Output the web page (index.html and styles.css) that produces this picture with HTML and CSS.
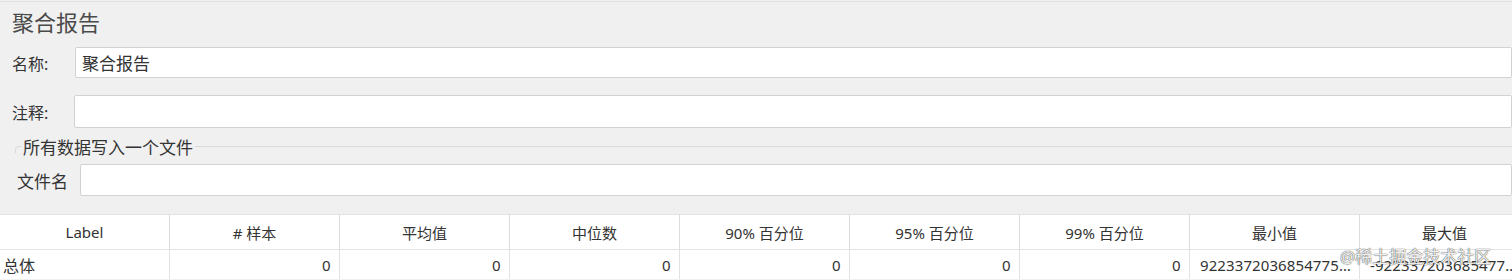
FILE: index.html
```html
<!DOCTYPE html>
<html>
<head>
	<meta charset="utf-8">
	<title>聚合报告</title>
	<link rel="stylesheet" href="styles.css">
</head>
<body>
	<div class="panel">
		<div class="title">聚合报告</div>

		<div class="row row-name">
			<label class="lbl" for="nombre">名称:</label>
			<input class="field" id="nombre" type="text" value="聚合报告">
		</div>

		<div class="row row-comment">
			<label class="lbl" for="comentario">注释:</label>
			<input class="field" id="comentario" type="text">
		</div>

		<div class="group">
			<span class="group-edge"></span>
			<span class="group-title">所有数据写入一个文件</span>
			<span class="group-line"></span>
		</div>

		<div class="row row-file">
			<label class="lbl" for="archivo">文件名</label>
			<input class="field" id="archivo" type="text">
		</div>

		<!-- tabla de resultados -->
		<div class="table-wrap">
			<table class="report">
				<thead>
					<tr>
						<th>Label</th>
						<th># 样本</th>
						<th>平均值</th>
						<th>中位数</th>
						<th>90% 百分位</th>
						<th>95% 百分位</th>
						<th>99% 百分位</th>
						<th>最小值</th>
						<th>最大值</th>
					</tr>
				</thead>
				<tbody>
					<tr>
						<td class="name">总体</td>
						<td>0</td>
						<td>0</td>
						<td>0</td>
						<td>0</td>
						<td>0</td>
						<td>0</td>
						<td class="long">9223372036854775807</td>
						<td class="long">-9223372036854775808</td>
					</tr>
				</tbody>
			</table>
			<div class="watermark">@稀土掘金技术社区</div>
		</div>
	</div>
</body>
</html>
```

FILE: styles.css
```css
body{
	margin: 0;
	background-color: #f0f0f0;
	font-family: "Noto Sans", "Noto Sans CJK SC", sans-serif;
	color: #3a3a3a;
	overflow: hidden;
}

.panel{
	margin-top: 1px;
	border-top: 1px solid #e3e3e3;
}

.title{
	height: 44px;
	line-height: 40px;
	padding-left: 12px;
	font-size: 22px;
	color: #4a4a4a;
}

.row{
	display: flex;
	align-items: center;
}

.lbl{
	flex: none;
	font-size: 16px;
	color: #333;
}

.field{
	flex: 1;
	box-sizing: border-box;
	margin: 0;
	padding: 0 6px;
	background: #fff;
	border: 1px solid #d2d2d2;
	border-radius: 2px;
	font-family: inherit;
	font-size: 17px;
	color: #333;
	outline: none;
}

.row-name{
	margin-top: 1px;
}
.row-name .lbl{
	width: 75px;
	padding-left: 12px;
	box-sizing: border-box;
}
.row-name .field{
	height: 31px;
}

.row-comment{
	margin-top: 17px;
}
.row-comment .lbl{
	width: 74px;
	padding-left: 12px;
	box-sizing: border-box;
}
.row-comment .field{
	height: 33px;
}

.group{
	display: flex;
	align-items: center;
	height: 20px;
	margin-top: 8px;
	padding-left: 15px;
}
.group-edge{
	width: 5px;
	height: 6px;
	margin-top: 6px;
	border-top: 1px solid #dadada;
	border-left: 1px solid #dadada;
	border-top-left-radius: 4px;
}
.group-title{
	padding: 0 2px;
	font-size: 17px;
	color: #333;
}
.group-line{
	flex: 1;
	border-top: 1px solid #dadada;
}

.row-file{
	margin-top: 8px;
}
.row-file .lbl{
	width: 80px;
	padding-left: 17px;
	box-sizing: border-box;
	font-size: 17px;
}
.row-file .field{
	height: 32px;
}

.table-wrap{
	position: relative;
	margin-top: 18px;
}

.report{
	table-layout: fixed;
	width: 1530px;
	border-collapse: collapse;
	background: #fff;
	font-size: 15px;
	color: #333;
}
.report th{
	width: 169px;
	height: 34px;
	padding: 0;
	font-weight: normal;
	border-top: 1px solid #e2e2e2;
	border-right: 1px solid #dcdcdc;
	border-bottom: 1px solid #e4e4e4;
}
.report td{
	height: 29px;
	padding: 0 8px;
	text-align: right;
	letter-spacing: 0.4px;
	border-right: 1px solid #e2e2e2;
	white-space: nowrap;
	overflow: hidden;
	text-overflow: ellipsis;
}
.report td.long{
	padding: 0 6px 0 10px;
	letter-spacing: 0.1px;
}
.report td.name{
	padding-left: 3px;
	text-align: left;
	letter-spacing: 0;
	font-size: 16px;
}

.watermark{
	position: absolute;
	left: 1340px;
	top: 33px;
	font-size: 17px;
	line-height: 20px;
	color: rgba(255, 255, 255, 0.92);
	text-shadow: 0 0 1px rgba(40, 40, 40, 0.9), 0 0 1px rgba(40, 40, 40, 0.6);
	white-space: nowrap;
}
```
